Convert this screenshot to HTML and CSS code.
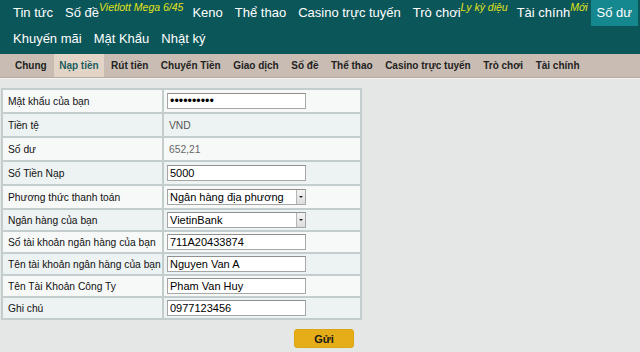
FILE: index.html
```html
<!DOCTYPE html>
<html lang="vi">
<head>
    <meta charset="UTF-8">
    <title>Nạp tiền</title>
    <link rel="stylesheet" href="styles.css">
</head>
<body>
    <!-- Menu chính -->
    <nav class="main-nav">
        <ul class="nav-row">
            <li>Tin tức</li>
            <li>Số đề<sup class="tag">Vietlott Mega 6/45</sup></li>
            <li>Keno</li>
            <li>Thể thao</li>
            <li>Casino trực tuyến</li>
            <li>Trò chơi<sup class="tag">Ly kỳ diệu</sup></li>
            <li>Tài chính<sup class="tag">Mới</sup></li>
            <li class="active">Số dư</li>
        </ul>
        <ul class="nav-row">
            <li>Khuyến mãi</li>
            <li>Mật Khẩu</li>
            <li>Nhật ký</li>
        </ul>
    </nav>

    <!-- Menu phụ -->
    <ul class="sub-nav">
        <li>Chung</li>
        <li class="active">Nạp tiền</li>
        <li>Rút tiền</li>
        <li>Chuyển Tiền</li>
        <li>Giao dịch</li>
        <li>Số đề</li>
        <li>Thể thao</li>
        <li>Casino trực tuyến</li>
        <li>Trò chơi</li>
        <li>Tài chính</li>
    </ul>

    <!-- Form nạp tiền -->
    <div class="content">
        <table class="deposit-table">
            <tr>
                <td class="label">Mật khẩu của bạn</td>
                <td><input class="field password" type="password" value="1234567890"></td>
            </tr>
            <tr>
                <td class="label">Tiền tệ</td>
                <td class="value">VND</td>
            </tr>
            <tr>
                <td class="label">Số dư</td>
                <td class="value balance">652,21</td>
            </tr>
            <tr>
                <td class="label">Số Tiền Nạp</td>
                <td><input class="field" type="text" value="5000"></td>
            </tr>
            <tr>
                <td class="label">Phương thức thanh toán</td>
                <td>
                    <span class="select-wrap">
                        <select class="field">
                            <option>Ngân hàng địa phương</option>
                        </select>
                        <span class="select-arrow"></span>
                    </span>
                </td>
            </tr>
            <tr class="short">
                <td class="label">Ngân hàng của bạn</td>
                <td>
                    <span class="select-wrap">
                        <select class="field">
                            <option>VietinBank</option>
                        </select>
                        <span class="select-arrow"></span>
                    </span>
                </td>
            </tr>
            <tr class="short">
                <td class="label">Số tài khoản ngân hàng của bạn</td>
                <td><input class="field" type="text" value="711A20433874"></td>
            </tr>
            <tr class="short">
                <td class="label">Tên tài khoản ngân hàng của bạn</td>
                <td><input class="field" type="text" value="Nguyen Van A"></td>
            </tr>
            <tr class="short">
                <td class="label">Tên Tài Khoản Công Ty</td>
                <td><input class="field" type="text" value="Pham Van Huy"></td>
            </tr>
            <tr class="short">
                <td class="label">Ghi chú</td>
                <td><input class="field" type="text" value="0977123456"></td>
            </tr>
        </table>

        <button class="submit-btn" type="button">Gửi</button>

        <div class="footer-edge"></div>
    </div>
</body>
</html>
```

FILE: styles.css
```css
* {
    margin: 0;
    padding: 0;
    box-sizing: border-box;
}

body {
    font-family: "Liberation Sans", Arial, sans-serif;
    background-color: #e5e7e6;
    color: #111;
    overflow: hidden;
}

ul {
    list-style: none;
}

/* Menu chính */
.main-nav {
    background-color: #0b5659;
    height: 54px;
    padding-left: 7px;
}

.nav-row {
    display: flex;
    white-space: nowrap;
    height: 26px;
    line-height: 26px;
    font-size: 13px;
    color: #fff;
}

.nav-row li {
    padding: 0 6px;
    cursor: pointer;
}

.nav-row li.active {
    background-color: #14878f;
}

.nav-row .tag {
    font-size: 10.5px;
    font-style: italic;
    line-height: 12px;
    color: #e1e31a;
    vertical-align: top;
    position: relative;
    top: 1px;
    margin-right: -3px;
}

/* Menu phụ */
.sub-nav {
    display: flex;
    height: 24px;
    padding-left: 10px;
    background-color: #c9bdb3;
    border-bottom: 1px solid #b8ab9f;
    box-shadow: 0 1px 0 #f3f3f3;
    font-size: 10px;
    font-weight: 700;
    line-height: 23px;
    color: #222;
}

.sub-nav li {
    padding: 0 5px;
    margin-right: 2.5px;
    cursor: pointer;
}

.sub-nav li.active {
    background-color: #e2d5c7;
    color: #1d5c60;
}

/* Nội dung */
.content {
    padding: 10px 0 0 1px;
}

.deposit-table {
    width: 361px;
    table-layout: fixed;
    border-collapse: collapse;
    border: 2px solid #c3cdcd;
    font-size: 10.25px;
}

.deposit-table td {
    height: 24px;
    padding: 0 3px;
    border: 2px solid #c3cdcd;
    vertical-align: middle;
}

.deposit-table tr:nth-child(odd) td {
    background-color: #f7f9f9;
}

.deposit-table tr:nth-child(even) td {
    background-color: #edf2f2;
}

.deposit-table tr.short td {
    height: 22px;
}

.deposit-table td.label {
    width: 161px;
    padding-left: 5px;
    white-space: nowrap;
}

.deposit-table td.value {
    padding-left: 5px;
    color: #555;
}

.deposit-table td.balance {
    color: #666;
}

.field {
    display: block;
    width: 139px;
    height: 16px;
    padding: 0 2px;
    border: 1px solid #a6a6a6;
    border-top-color: #8f8f8f;
    background: #fff;
    font-family: "Liberation Sans", Arial, sans-serif;
    font-size: 11px;
    color: #000;
    outline: none;
}

.field.password {
    font-size: 12.5px;
}

select.field {
    -webkit-appearance: none;
    appearance: none;
    border-radius: 0;
}

.select-wrap {
    position: relative;
    display: block;
    width: 139px;
}

/* nút mũi tên của ô chọn */
.select-arrow {
    position: absolute;
    top: 1px;
    right: 1px;
    width: 9px;
    height: 14px;
    background: linear-gradient(#f4f4f4, #dcdcdc);
    border-left: 1px solid #b5b5b5;
}

.select-arrow::after {
    content: "";
    position: absolute;
    top: 6px;
    left: 2px;
    border-left: 2px solid transparent;
    border-right: 2px solid transparent;
    border-top: 2px solid #222;
}

.submit-btn {
    display: block;
    width: 60px;
    height: 19px;
    margin: 9px 0 0 293px;
    background-color: #e5ad17;
    border: 1px solid #dba513;
    border-radius: 3px;
    font-family: "Liberation Sans", Arial, sans-serif;
    font-size: 11px;
    font-weight: 700;
    color: #1a1a1a;
    cursor: pointer;
}

.footer-edge {
    height: 2px;
    margin: 4px 0 0 506px;
    background-color: #7c9aa9;
}
```
